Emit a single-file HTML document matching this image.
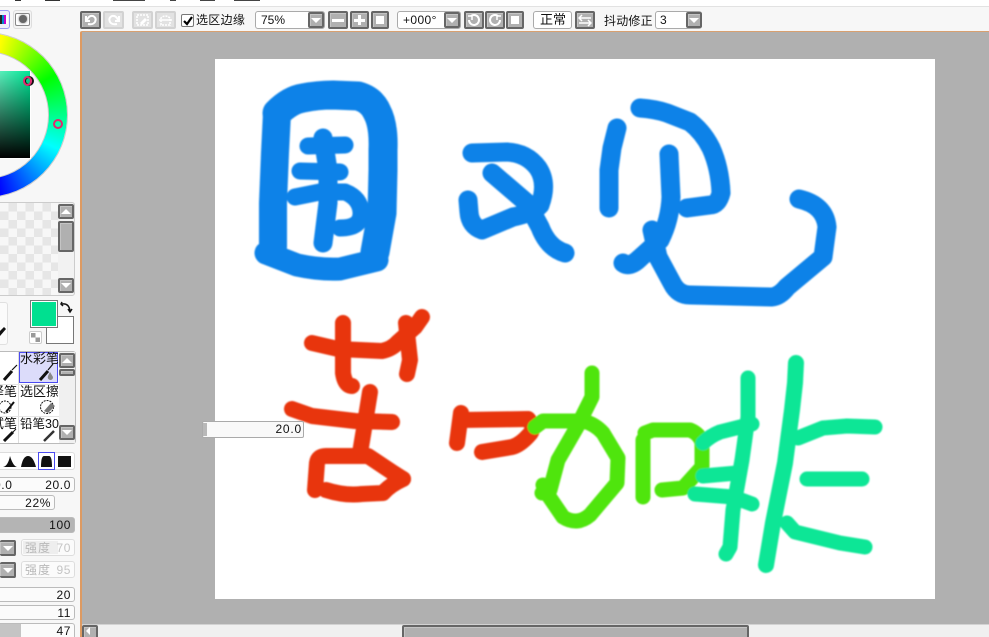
<!DOCTYPE html>
<html><head><meta charset="utf-8"><style>
html,body{margin:0;padding:0;width:989px;height:637px;overflow:hidden;background:#f7f7f7}
body{position:relative;font:12px "Liberation Sans","WenQuanYi Zen Hei","Noto Sans CJK SC",sans-serif;color:#111}
div,svg,span{position:absolute;box-sizing:border-box}
.b{border:2px solid #666;background:#b0b0b0;border-radius:2px;box-shadow:inset 1px 1px 0 #c4c4c4}
.d{border:2px solid #d2d2d2;background:#e2e2e2;border-radius:2px}
.i{border:1px solid #aaa;background:#fff;border-radius:3px;height:18px;top:11px}
.f{border:1px solid #bbb;background:#fbfbfb;border-radius:3px;white-space:nowrap;overflow:hidden}
.t{white-space:nowrap;line-height:14px}
.r{right:3px;top:0;line-height:14px;letter-spacing:.6px}
.ar{width:0;height:0;border-left:5px solid transparent;border-right:5px solid transparent;border-top:5px solid #fff}
.au{width:0;height:0;border-left:5px solid transparent;border-right:5px solid transparent;border-bottom:5px solid #fff}
.c{overflow:hidden;white-space:nowrap;font-size:13px;line-height:14px}
</style></head><body>

<!-- top strip -->
<div style="left:0;top:0;width:989px;height:6px;background:#fff"></div>
<div style="left:15px;top:0;width:6px;height:1px;background:#333"></div>
<div style="left:45px;top:0;width:15px;height:1px;background:#333"></div>
<div style="left:113px;top:0;width:32px;height:1px;background:#444"></div>
<div style="left:170px;top:0;width:6px;height:1px;background:#444"></div>
<div style="left:200px;top:0;width:15px;height:1px;background:#444"></div>
<div style="left:234px;top:0;width:26px;height:1px;background:#444"></div>
<div style="left:0;top:6px;width:989px;height:1px;background:#e2e2e2"></div>

<!-- canvas area -->
<div style="left:80px;top:31px;width:909px;height:606px;background:#b0b0b0;border-left:2px solid #dd9a62;border-top:1px solid #d8a070;border-top-left-radius:2px"></div>
<div style="left:215px;top:59px;width:720px;height:540px;background:#fff"></div>

<svg width="989" height="637" style="left:0;top:0" fill="none" stroke-linecap="round" stroke-linejoin="round">
<defs><filter id="s" x="-5%" y="-5%" width="110%" height="110%"><feGaussianBlur stdDeviation="0.8"/></filter></defs>
<g filter="url(#s)">
<g stroke="#1182e8">
<path stroke-width="29" d="M277 113Q290 100 303 98Q318 95 333 95L358 96Q372 100 377 112Q384 125 383 150L383 170L382 213L375 252"/>
<path stroke-width="28" d="M277 113L275 153L273 203L273 247"/>
<path stroke-width="23" d="M266 253L297 265Q320 270 340 269L377 260"/>
<g stroke-width="17">
<path d="M308 146L345 145"/>
<path d="M300 171L340 172"/>
<path d="M295 197L320 192L345 192Q360 198 361 212Q362 228 340 228"/>
<path stroke-width="19" d="M323 138L328 170L328 203L323 243"/>
<path stroke-width="19" d="M472 153L507 152Q527 153 538 168Q548 183 540 205Q533 213 513 217L482 230Q470 226 469 212L468 200"/>
<path stroke-width="19" d="M492 173L527 203L540 227Q548 248 565 253"/>
<path stroke-width="19" d="M640 108Q655 109 667 113L690 122Q703 132 711 148Q720 168 721 193Q718 205 710 205L687 208"/>
<path stroke-width="19" d="M617 128L612 148L609 170L609 208"/>
<path stroke-width="19" d="M669 154L671 197Q670 220 660 240L640 258Q630 268 623 263"/>
<path stroke-width="19" d="M652 230L658 257L672 283Q678 295 690 295L772 297Q780 296 787 287L823 257L827 227Q825 205 799 199"/>
</g>
</g>
<g stroke="#e83510" stroke-width="16">
<path d="M312 343L338 349L382 351Q392 349 398 342L415 327L422 317"/>
<path d="M343 323L343 373Q345 386 352 386"/>
<path d="M406 323L410 360L407 374"/>
<path d="M292 409L312 416L355 421L392 422"/>
<path d="M370 392L365 423L360 453"/>
<path d="M315 490L317 463Q318 456 326 456L368 456L392 472L403 479"/>
<path d="M326 490Q345 496 362 494L383 493Q390 485 403 479"/>
<path d="M461 413L457 443"/>
<path d="M462 420L528 419Q536 428 529 435Q520 445 512 447L482 452"/>
</g>
<g stroke="#4fe50a" stroke-width="15">
<path d="M535 427L543 421L583 421Q595 424 603 433L618 458L617 483L590 515Q577 526 563 517L548 495L543 485"/>
<path d="M592 373L592 397L577 427L558 460L550 490L542 493"/>
<path d="M643 440L643 497"/>
<path d="M645 433L653 430L690 430Q700 434 702 443L702 467L683 488L662 490"/>
</g>
<g stroke="#10e696" stroke-width="15">
<path d="M748 378L748 417L742 460L733 510L730 547L726 554"/>
<path d="M703 443Q710 436 720 432L752 424"/>
<path d="M703 476L737 473"/>
<path d="M695 494L733 497L752 504"/>
<path stroke-width="16" d="M796 363L795 383L792 410L785 463L773 523L766 565"/>
<path d="M798 438L823 428L847 426L875 427"/>
<path d="M807 479L862 479"/>
<path d="M787 523L795 532L840 543L865 547"/>
</g>
</g>
</svg>

<!-- toolbar -->
<div class="b" style="left:80px;top:11px;width:21px;height:18px"></div>
<svg style="left:84px;top:13px" width="14" height="14" fill="none" stroke="#fff" stroke-width="2"><path d="M2 3L2 8L6 8M3 7Q5 2 9 3Q13 5 11 9Q9 12 4 11"/></svg>
<div class="d" style="left:103px;top:11px;width:21px;height:18px"></div>
<svg style="left:107px;top:13px" width="14" height="14" fill="none" stroke="#fff" stroke-width="2"><path d="M12 3L12 8L8 8M11 7Q9 2 5 3Q1 5 3 9Q5 12 10 11"/></svg>
<div class="d" style="left:132px;top:11px;width:21px;height:18px"></div>
<svg style="left:135px;top:13px" width="15" height="14" fill="none" stroke="#fff" stroke-width="1.5"><path stroke-dasharray="2 1" d="M2 2H13V12H2Z"/><path stroke-width="3" d="M6 11L11 6"/></svg>
<div class="d" style="left:155px;top:11px;width:21px;height:18px"></div>
<svg style="left:158px;top:13px" width="15" height="14" fill="none" stroke="#fff" stroke-width="1.5"><path stroke-dasharray="2 1" d="M3 12V5Q7 1 12 5V12Z"/><path d="M1 7H14"/></svg>

<div style="left:181px;top:14px;width:13px;height:13px;border:1px solid #777;border-radius:2px;background:#fff"></div>
<svg style="left:182px;top:15px" width="12" height="12" fill="none" stroke="#000" stroke-width="2.2"><path d="M2 6L5 9L10 2"/></svg>
<div class="t" style="left:196px;top:13px;font-size:12px;letter-spacing:.3px">选区边缘</div>

<div class="i" style="left:255px;width:70px"></div>
<div class="t" style="left:261px;top:13px">75%</div>
<div class="b" style="left:308px;top:12px;width:16px;height:16px"></div><div class="ar" style="left:311px;top:18px"></div>
<div class="b" style="left:328px;top:11px;width:20px;height:18px"></div><div style="left:332px;top:19px;width:12px;height:3px;background:#fff"></div>
<div class="b" style="left:350px;top:11px;width:19px;height:18px"></div><div style="left:354px;top:19px;width:11px;height:3px;background:#fff"></div><div style="left:358px;top:15px;width:3px;height:10px;background:#fff"></div>
<div class="b" style="left:371px;top:11px;width:18px;height:18px"></div><div style="left:376px;top:16px;width:8px;height:8px;background:#fff"></div>

<div class="i" style="left:397px;width:64px"></div>
<div class="t" style="left:403px;top:13px;letter-spacing:.4px">+000°</div>
<div class="b" style="left:444px;top:12px;width:16px;height:16px"></div><div class="ar" style="left:447px;top:18px"></div>
<div class="b" style="left:464px;top:11px;width:20px;height:18px"></div>
<svg style="left:467px;top:13px" width="14" height="14" fill="none" stroke="#fff" stroke-width="2"><path d="M4 3A5 5 0 1 1 2 7"/><path d="M1 3H5V7" stroke-width="1.5"/></svg>
<div class="b" style="left:485px;top:11px;width:20px;height:18px"></div>
<svg style="left:488px;top:13px" width="14" height="14" fill="none" stroke="#fff" stroke-width="2"><path d="M10 3A5 5 0 1 0 12 7"/><path d="M13 3H9V7" stroke-width="1.5"/></svg>
<div class="b" style="left:506px;top:11px;width:18px;height:18px"></div><div style="left:511px;top:16px;width:8px;height:8px;background:#fff"></div>

<div class="i" style="left:533px;width:39px"></div>
<div class="t" style="left:540px;top:13px;font-size:13px">正常</div>
<div class="b" style="left:575px;top:11px;width:20px;height:18px"></div>
<svg style="left:578px;top:14px" width="14" height="13" fill="none" stroke="#fff" stroke-width="1.5"><path d="M1 4H13M4 1L1 4L4 7M13 9H1M10 6L13 9L10 12"/></svg>
<div class="t" style="left:604px;top:14px;letter-spacing:.2px">抖动修正</div>
<div class="i" style="left:655px;width:47px"></div>
<div class="t" style="left:660px;top:13px">3</div>
<div class="b" style="left:686px;top:12px;width:16px;height:16px"></div><div class="ar" style="left:689px;top:18px"></div>

<!-- left panel top buttons -->
<div style="left:-4px;top:10px;width:14px;height:19px;border:1px solid #9c9cf0;border-radius:3px;background:#f0f0fa"></div>
<div style="left:0;top:15px;width:8px;height:9px;background:repeating-linear-gradient(90deg,#222 0 2px,#08c 2px 4px,#c0c 4px 6px,#fff 6px 8px)"></div>
<div style="left:13px;top:10px;width:19px;height:19px;border:1px solid #ddd;border-radius:3px;background:#f4f4f4"></div>
<div style="left:15px;top:13px;width:15px;height:13px;border:1px solid #888;background:#fff;border-radius:2px"></div>
<div style="left:19px;top:15px;width:8px;height:8px;border-radius:50%;background:#666;box-shadow:0 0 2px #666"></div>

<!-- colour wheel -->
<div style="left:-98px;top:32px;width:166px;height:166px;border-radius:50%;border:1px solid #ccc;background:#f8f8f8"></div>
<div style="left:-97px;top:33px;width:164px;height:164px;border-radius:50%;background:conic-gradient(#ff0 12deg,#0f0 60deg,#0ff 115deg,#00f 170deg,#f0f 240deg,#f00 318deg,#ff0 372deg)"></div>
<div style="left:-79px;top:51px;width:128px;height:128px;border-radius:50%;background:#f8f8f8;border:1px solid #ccc"></div>
<div style="left:-56px;top:71px;width:87px;height:88px;background:linear-gradient(to bottom,rgba(0,0,0,0),#000),linear-gradient(to right,#fff,#00e696);border:1px solid #fff;border-width:0 1px 1px 0"></div>
<div style="left:24px;top:76px;width:10px;height:10px;border-radius:50%;border:2px solid #111"></div>
<div style="left:23px;top:76px;width:9px;height:10px;border-radius:50%;border:2px solid #e0286e"></div>
<div style="left:53px;top:119px;width:10px;height:10px;border-radius:50%;border:2px solid #e0286e"></div>

<!-- swatch panel -->
<div style="left:-3px;top:202px;width:78px;height:94px;border:1px solid #ccc;border-radius:3px;background:#f2f2f2"></div>
<div style="left:0;top:203px;width:58px;height:92px;background-color:#f7f7f7;background-image:conic-gradient(#e6e6e6 25%,#f7f7f7 0 50%,#e6e6e6 0 75%,#f7f7f7 0);background-size:17px 17px"></div>
<div class="b" style="left:58px;top:204px;width:16px;height:15px"></div><div class="au" style="left:61px;top:209px"></div>
<div class="b" style="left:58px;top:221px;width:16px;height:31px"></div>
<div class="b" style="left:58px;top:278px;width:16px;height:15px"></div><div class="ar" style="left:61px;top:283px"></div>

<!-- colour selection -->
<div style="left:-3px;top:302px;width:11px;height:43px;border:1px solid #e0e0e0;border-radius:3px;background:#fbfbfb"></div>
<svg style="left:0;top:324px" width="8" height="14"><path d="M0 12L6 5L4 3L0 7Z" fill="#111"/></svg>
<div style="left:46px;top:316px;width:28px;height:28px;border:1px solid #777;background:#fff"></div>
<div style="left:30px;top:300px;width:28px;height:28px;border:1px solid #777;background:#00e090;box-shadow:inset 0 0 0 1px #fff"></div>
<svg style="left:60px;top:300px" width="14" height="14" fill="none" stroke="#111" stroke-width="1.5"><path d="M2 4Q9 3 10 11"/><path d="M2 2L1 4L3 6M8 9L10 12L12 9" stroke-width="1.5"/></svg>
<div style="left:29px;top:331px;width:13px;height:13px;border:1px solid #ccc;border-radius:2px;background:#fff"></div>
<div style="left:31px;top:333px;width:9px;height:9px;background:conic-gradient(#fff 25%,#999 0 50%,#fff 0 75%,#999 0)"></div>

<!-- tool grid -->
<div style="left:-3px;top:351px;width:79px;height:93px;border:1px solid #bbb;border-radius:3px;background:#fff"></div>
<div style="left:18px;top:352px;width:1px;height:91px;background:#ddd"></div>
<div style="left:-1px;top:384px;width:60px;height:1px;background:#e4e4e4"></div>
<div style="left:-1px;top:416px;width:60px;height:1px;background:#e4e4e4"></div>
<div style="left:59px;top:352px;width:16px;height:91px;background:#f0f0f0"></div>
<div style="left:19px;top:352px;width:39px;height:31px;background:#dcdcfa;border:1px solid #4b4bf0"></div>
<div class="c" style="left:20px;top:352px;width:38px">水彩笔</div>
<svg style="left:38px;top:363px" width="18" height="19" fill="none" stroke="#111"><path stroke-width="3" d="M2 17L10 8"/><path stroke-width="1.2" d="M10 7L15 1"/><path fill="#888" stroke="none" d="M12 9L15 14Q15 17 12 17Q9 16 10 13Z"/></svg>
<svg style="left:2px;top:364px" width="16" height="18" fill="none" stroke="#111"><path stroke-width="3" d="M2 16L10 7"/><path stroke-width="1.2" d="M10 6L15 1"/></svg>
<div class="c" style="left:-8px;top:385px;width:25px;text-align:right;direction:rtl">译笔</div>
<svg style="left:0;top:398px" width="17" height="17" fill="none" stroke="#111"><circle cx="5" cy="9" r="6" stroke-dasharray="2 1"/><path stroke-width="2" d="M6 14L14 4"/></svg>
<div class="c" style="left:20px;top:385px;width:38px">选区擦</div>
<svg style="left:39px;top:398px" width="18" height="17" fill="none" stroke="#111"><circle cx="8" cy="9" r="6.5" stroke-dasharray="2 1"/><path stroke="none" fill="#777" d="M5 13L12 5L16 8L9 15Z"/></svg>
<div class="c" style="left:-8px;top:417px;width:25px;text-align:right;direction:rtl">试笔</div>
<svg style="left:2px;top:428px" width="15" height="14" fill="none" stroke="#111"><path stroke-width="3" d="M2 13L11 4"/><path d="M11 4L14 1"/></svg>
<div class="c" style="left:20px;top:417px;width:39px;font-size:12.5px">铅笔30</div>
<svg style="left:42px;top:428px" width="15" height="14" fill="none" stroke="#333"><path stroke-width="2.5" d="M2 13L12 3"/></svg>
<div class="b" style="left:59px;top:353px;width:16px;height:15px"></div><div class="au" style="left:62px;top:358px"></div>
<div class="b" style="left:59px;top:369px;width:16px;height:7px"></div>
<div class="b" style="left:59px;top:425px;width:16px;height:15px"></div><div class="ar" style="left:62px;top:430px"></div>

<!-- brush shape row -->
<div style="left:-3px;top:452px;width:78px;height:18px;border:1px solid #ddd;border-radius:3px;background:#fff"></div>
<svg style="left:0;top:453px" width="75" height="16" fill="#111"><path d="M3 14Q8 13 10 3Q13 13 17 14Z"/><path d="M21 14Q23 3 28 3Q33 3 36 14Z"/><path d="M41 14Q41 3 44 3H49Q52 3 52 14Z"/><path d="M58 3H71V14H58Z"/></svg>
<div style="left:38px;top:452px;width:17px;height:18px;border:1px solid #4b4bf0;background:none"></div>

<!-- value fields -->
<div class="f" style="left:-4px;top:477px;width:79px;height:15px"><span class="r">20.0</span><span class="t" style="left:-3px;top:0;letter-spacing:.6px;">0.0</span></div>
<div class="f" style="left:-4px;top:495px;width:59px;height:15px"><span class="r">22%</span></div>
<div class="f" style="left:-4px;top:517px;width:79px;height:16px;background:#b4b4b4"><span class="r">100</span></div>

<div class="b" style="left:0;top:540px;width:16px;height:16px;border-left:0"></div><div class="ar" style="left:3px;top:546px"></div>
<div class="f" style="left:21px;top:539px;width:54px;height:17px;border-color:#ddd;color:#b8b8b8"><span style="left:1px;top:1px;width:35px;height:13px;background:#eee"></span><span class="t" style="left:3px;top:1px;letter-spacing:1px">强度</span><span class="r" style="top:1px;color:#c4c4c4">70</span></div>
<div class="b" style="left:0;top:562px;width:16px;height:16px;border-left:0"></div><div class="ar" style="left:3px;top:568px"></div>
<div class="f" style="left:21px;top:561px;width:54px;height:17px;border-color:#ddd;color:#b8b8b8"><span class="t" style="left:3px;top:1px;letter-spacing:1px">强度</span><span class="r" style="top:1px;color:#c4c4c4">95</span></div>

<div class="f" style="left:-4px;top:587px;width:79px;height:15px"><span class="r">20</span></div>
<div class="f" style="left:-4px;top:605px;width:79px;height:15px"><span class="r">11</span></div>
<div class="f" style="left:-4px;top:623px;width:79px;height:20px"><span style="left:0;top:0;width:24px;height:20px;background:#c4c4c4"></span><span class="r">47</span></div>

<!-- bottom scrollbar -->
<div style="left:82px;top:624px;width:907px;height:13px;background:#f0f0f0;border-top:1px solid #d2d2d2"></div>
<div class="b" style="left:82px;top:625px;width:16px;height:14px"></div>
<div style="left:86px;top:627px;width:0;height:0;border-top:4px solid transparent;border-bottom:4px solid transparent;border-right:4px solid #fff"></div>
<div class="b" style="left:402px;top:625px;width:347px;height:15px"></div>

<!-- slider popup -->
<div style="left:202px;top:421px;width:102px;height:17px;border:1px solid #aaa;border-radius:2px;background:#f9f9f9"></div>
<div style="left:203px;top:423px;width:4px;height:13px;background:#b8b8b8"></div>
<div class="t" style="right:687px;top:422px;letter-spacing:.8px">20.0</div>

</body></html>
